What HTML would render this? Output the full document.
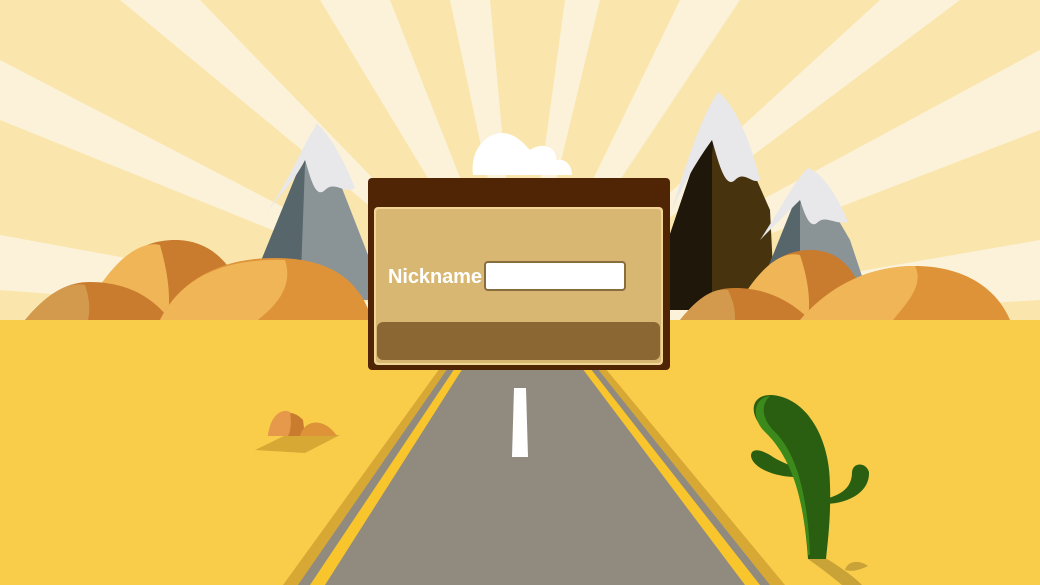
<!DOCTYPE html><html><head><style>body{margin:0}svg{display:block}</style></head><body>
<svg width="1040" height="585" viewBox="0 0 1040 585" xmlns="http://www.w3.org/2000/svg">
<rect width="1040" height="585" fill="#fae6ac"/>
<g fill="#fbf2d9">
<polygon points="520,330 120,0 200,0"/>
<polygon points="520,330 320,0 390,0"/>
<polygon points="520,330 450,0 490,0"/>
<polygon points="520,330 565,0 600,0"/>
<polygon points="520,330 680,0 740,0"/>
<polygon points="520,330 880,0 960,0"/>
<polygon points="520,330 1040,50 1040,130"/>
<polygon points="520,330 1040,240 1040,300"/>
<polygon points="520,330 0,60 0,120"/>
<polygon points="520,330 0,235 0,290"/>
</g>
<path d="M473,175 C470,150 485,135 500,133 C515,132 525,145 530,150 C545,140 558,150 556,160 C568,158 572,168 572,175Z" fill="#fff"/>
<polygon points="317,124 245,300 370,300 370,260" fill="#8a9497"/>
<polygon points="317,124 245,300 300,300 305,165" fill="#56666a"/>
<path d="M317,124 C300,150 290,180 265,215 C280,195 295,180 305,160 C310,175 315,200 325,190 C335,180 345,195 355,188 C340,150 325,130 317,124Z" fill="#e8e7ea"/>
<polygon points="718,92 668,240 668,310 775,310 770,210" fill="#48330f"/>
<polygon points="718,92 668,240 668,310 712,310 712,155" fill="#1e170a"/>
<path d="M718,92 C705,110 690,150 672,210 C690,170 705,150 712,140 C718,160 725,190 735,180 C745,170 752,185 760,180 C748,130 730,100 718,92Z" fill="#e8e7ea"/>
<polygon points="808,168 755,300 870,300 850,240" fill="#8a9497"/>
<polygon points="808,168 755,300 800,300 800,205" fill="#56666a"/>
<path d="M808,168 C795,180 780,210 760,240 C780,220 795,205 800,200 C805,215 810,230 818,222 C826,215 835,225 848,222 C835,190 820,172 808,168Z" fill="#e8e7ea"/>
<path d="M80,320 C110,260 140,240 175,240 C215,240 240,270 250,320Z" fill="#c97b2e"/>
<path d="M80,320 C110,260 140,240 160,245 C170,280 170,300 168,320Z" fill="#efb556"/>
<path d="M25,320 C50,290 70,282 90,282 C130,282 155,300 170,320Z" fill="#c97b2e"/>
<path d="M25,320 C50,290 70,282 85,285 C90,300 90,310 88,320Z" fill="#d39a4e"/>
<path d="M160,320 C180,280 220,258 275,258 C330,258 360,280 372,320Z" fill="#de9339"/>
<path d="M160,320 C180,280 220,258 285,260 C295,290 270,310 258,320Z" fill="#efb556"/>
<path d="M730,320 C755,270 780,250 810,250 C840,250 860,270 870,320Z" fill="#c97b2e"/>
<path d="M730,320 C755,270 780,250 800,255 C810,285 810,305 808,320Z" fill="#efb556"/>
<path d="M680,320 C700,295 715,288 735,288 C765,288 790,300 810,320Z" fill="#c97b2e"/>
<path d="M680,320 C700,295 715,288 728,290 C735,305 735,312 735,320Z" fill="#d39a4e"/>
<path d="M800,320 C830,285 870,266 915,266 C960,266 995,285 1010,320Z" fill="#de9339"/>
<path d="M800,320 C830,285 870,266 915,266 C925,285 905,305 893,320Z" fill="#efb556"/>
<rect y="320" width="1040" height="265" fill="#f9cd4a"/>
<polygon points="440,368 605,368 785,585 283,585" fill="#d8a835"/>
<polygon points="448,368 597,368 770,585 298,585" fill="#918a7e"/>
<polygon points="455,368 463,368 325,585 310,585" fill="#f9c52c"/>
<polygon points="582,368 590,368 760,585 745,585" fill="#f9c52c"/>
<polygon points="514,388 526,388 528,457 512,457" fill="#fff"/>
<polygon points="255,450 290,433 340,435 305,453" fill="#d8a835"/>
<path d="M268,436 C270,415 290,405 303,420 L305,436Z" fill="#c97b2e"/>
<path d="M268,436 C270,415 282,408 290,412 C292,425 290,432 288,436Z" fill="#e6994a"/>
<path d="M300,436 C305,418 325,418 337,436Z" fill="#de9339"/>
<!-- cactus -->
<path d="M808,559 L827,559 C845,570 855,578 862,585 L842,585 C830,575 818,566 808,559Z" fill="#c9a238"/>
<path d="M845,570 C848,560 860,560 868,566 C860,570 852,572 845,570Z" fill="#c9a238"/>
<path d="M793,477 C770,476 752,466 751,456 C751,448 760,449 770,455 C780,462 790,465 796,468Z" fill="#2a5f12"/>
<path d="M825,499 C845,494 852,485 852,472 C853,462 866,462 869,472 C870,490 852,503 826,504Z" fill="#2a5f12"/>
<path d="M808,559 C804,500 792,455 765,430 C748,415 750,394 772,395 C808,398 830,440 830,485 C831,515 828,540 826,559Z" fill="#2a5f12"/>
<path d="M808,555 C804,500 792,458 765,432 C752,420 752,398 770,396 C760,405 762,420 775,432 C798,455 808,500 810,555Z" fill="#3d8a1c"/>
<rect x="368" y="178" width="302" height="192" rx="4" fill="#502505"/>
<rect x="374" y="207" width="289" height="158" rx="4" fill="#f0d595"/>
<rect x="376" y="209" width="285" height="154" rx="3" fill="#d8b772"/>
<rect x="377" y="322" width="283" height="38" rx="6" fill="#8a6733"/>
<rect x="485" y="262" width="140" height="28" rx="3" fill="#fff" stroke="#8a6d3f" stroke-width="2"/>
<text x="388" y="283" font-family="'Liberation Sans',sans-serif" font-size="20" font-weight="bold" fill="#fff" textLength="94">Nickname</text>
</svg>
</body></html>
